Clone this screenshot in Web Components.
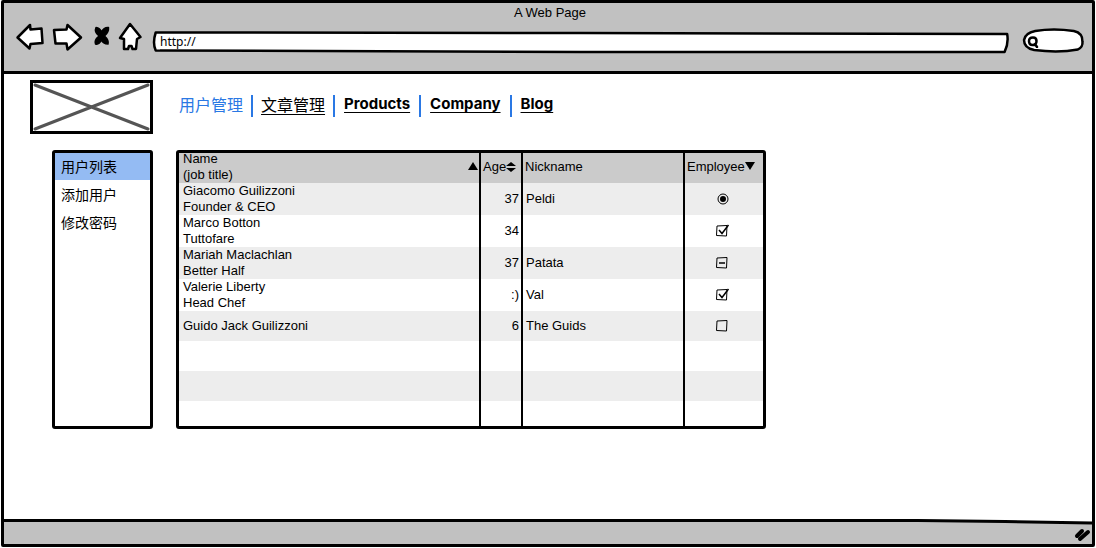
<!DOCTYPE html>
<html lang="zh">
<head>
<meta charset="utf-8">
<title>A Web Page</title>
<style>
  body { margin: 0; background: #fff; color: #000; font: 13px/16px "Liberation Sans", "Noto Sans CJK SC", sans-serif; }
</style>
</head>
<body>
<browser-window heading="A Web Page" address="http://">
  <page-layout>
    <image-placeholder slot="logo"></image-placeholder>
    <link-bar slot="nav" items="用户管理,文章管理,Products,Company,Blog"></link-bar>
    <side-menu slot="side" items="用户列表,添加用户,修改密码"></side-menu>
    <data-grid></data-grid>
  </page-layout>
</browser-window>

<script>
const define = (name, render) => customElements.define(name, class extends HTMLElement {
  connectedCallback() {
    if (this.shadowRoot) return;
    const t = document.createElement('template');
    t.innerHTML = render(this);
    this.attachShadow({ mode: 'open' }).append(t.content.cloneNode(true));
  }
});

// Hand-drawn outline stretched behind the slotted control
const outlines = {
  bar: ['0 0 100 22', 'M0.2 1.5 L50 2 L99.9 3 Q100.1 12 99.6 21 L50 21 L0.2 19.5 Q-0.2 12 0.2 1.5Z'],
  pill: ['0 0 60 25', 'M12 3 Q30 0 50 3 Q59 5 58.500 14 Q59 19 54 21.500 Q35 25 11 22 Q1 20 1 12 Q2 5 12 3Z']
};
define('sketch-box', el => {
  const [box, d] = outlines[el.getAttribute('shape')];
  return `
  <style>
    :host { display: grid; }
    svg, .in { grid-area: 1 / 1; min-width: 0; }
    svg { width: 100%; height: 100%; min-height: 0; overflow: visible; }
    path { fill: #fff; stroke: #000; stroke-width: 2.5; stroke-linejoin: round; vector-effect: non-scaling-stroke; }
    .in { position: relative; display: flex; align-items: center; }
  </style>
  <svg viewBox="${box}" preserveAspectRatio="none" aria-hidden="true"><path d="${d}"/></svg>
  <div class="in"><slot></slot></div>`;
});

define('tool-icon', el => {
  const art = {
    Back: [28, '<path d="M1.500 14.500 14 2 14.500 6.500 25.500 5.500 26.500 20 14.500 21 13.500 25.500Z"/>'],
    Forward: [28, '<path d="M0 7 12.500 6.500 13.500 2 27 14.500 13.500 26.500 12.500 20.500 1.500 20.500Z"/>'],
    Stop: [18, '<path class="solid" d="M4 4.500Q8 5 9.500 9Q12 4 16.500 4.500Q17 9 12.500 13Q17 17 16 21Q11 21 9.500 17Q7 22 3.500 21Q2 17 7 13Q2 9 4 4.500Z"/>'],
    Home: [24, '<path d="M10 1 20.500 14 17 16 16 26 12.500 26 11.500 23 9 23 8 26 4 26 4 16 0 15Z"/>']
  };
  const name = el.getAttribute('name'), [w, path] = art[name];
  return `
  <style>
    :host { display: block; }
    button { display: block; padding: 0; border: 0; background: none; }
    svg { display: block; overflow: visible; fill: #fff; stroke: #000; stroke-width: 2.5; stroke-linejoin: round; }
    .solid { fill: #000; stroke-width: 1.5; }
  </style>
  <button aria-label="${name}"><svg width="${w}" height="28" viewBox="0 0 ${w} 28">${path}</svg></button>`;
});

define('browser-window', el => `
  <style>
    :host { display: flex; flex-direction: column; box-sizing: border-box; min-height: 100vh; padding: 0 1px 1px; }
    .frame { flex: 1; display: flex; flex-direction: column; border: 3px solid #000; border-radius: 2px; }
    header { background: #c1c1c1; border-bottom: 3px solid #000; padding: 2px 8px 20px 12px; }
    h1 { margin: 0 0 2px; font: inherit; text-align: center; }
    .tools { display: flex; align-items: flex-start; gap: 10px; height: 28px; }
    .url { flex: 1; height: 22px; margin-top: 8px; }
    .find { width: 61px; height: 25px; margin: 5px 0 0 5px; }
    input { width: 100%; min-width: 0; box-sizing: border-box; border: 0; padding: 0 6px; outline: 0; background: none; color: inherit; font: 12px/20px "Noto Sans", sans-serif; }
    .find input { padding: 0 8px 0 18px; }
    .lens { position: absolute; left: 4px; top: 7px; fill: none; stroke: #000; stroke-width: 2.5; stroke-linecap: round; }
    main { flex: 1; }
    footer { display: grid; height: 25px; }
    footer svg { grid-area: 1 / 1; }
    .bar { width: 100%; height: 25px; fill: #c1c1c1; overflow: visible; }
    .bar .edge { fill: none; stroke: #000; stroke-width: 3; vector-effect: non-scaling-stroke; }
    .grip { justify-self: end; align-self: end; fill: none; stroke: #000; stroke-width: 4; stroke-linecap: round; }
  </style>
  <div class="frame">
    <header>
      <h1>${el.getAttribute('heading')}</h1>
      <div class="tools">
        <tool-icon name="Back"></tool-icon>
        <tool-icon name="Forward"></tool-icon>
        <tool-icon name="Stop"></tool-icon>
        <tool-icon name="Home"></tool-icon>
        <sketch-box class="url" shape="bar"><input aria-label="Address" value="${el.getAttribute('address')}"></sketch-box>
        <sketch-box class="find" shape="pill">
          <svg class="lens" width="13" height="13" viewBox="0 0 13 13" aria-hidden="true"><path d="M9.500 6C9.500 9 8 10 5.500 10S2 9 2 6 3.500 2.500 6 2.500 9.500 3.500 9.500 6ZM8 9 10 12"/></svg>
          <input aria-label="Search">
        </sketch-box>
      </div>
    </header>
    <main><slot></slot></main>
    <footer>
      <svg class="bar" viewBox="0 0 100 25" preserveAspectRatio="none" aria-hidden="true"><path d="M0 1 80 1 100 4V25H0Z"/><path class="edge" d="M0 1.500H84L92 2.500 100 4"/></svg>
      <svg class="grip" width="18" height="18" viewBox="0 0 18 18" aria-hidden="true"><path d="M3 10 8 5M6 13 14 6"/></svg>
    </footer>
  </div>`);

define('page-layout', () => `
  <style>
    :host { display: grid; grid-template-columns: 121px minmax(0, 1fr); gap: 18px 25px; padding: 7px 27px 24px; }
    .side { margin-left: 22px; display: grid; }
    .nav { padding: 0 0 2px 2px; align-self: center; }
  </style>
  <slot name="logo"></slot>
  <div class="nav"><slot name="nav"></slot></div>
  <div class="side"><slot name="side"></slot></div>
  <div><slot></slot></div>`);

define('image-placeholder', () => `
  <style>
    :host { display: block; outline: 3px solid #000; outline-offset: -2px; }
    svg { display: block; width: 100%; height: 52px; fill: none; stroke: #555; stroke-width: 3; stroke-linecap: round; }
  </style>
  <svg viewBox="0 0 121 52" preserveAspectRatio="none" role="img" aria-label="Logo"><path d="M4 4 117 48M4 48 117 4"/></svg>`);

define('link-bar', el => `
  <style>
    :host { display: block; }
    ul { display: flex; flex-wrap: wrap; margin: 0; padding: 0; list-style: none; }
    li { height: 22px; padding: 0 8px; }
    li.latin { padding: 0 9px; }
    li:first-child { padding-left: 0; }
    li + li { border-left: 2px solid #2a78e4; }
    a { display: block; color: #000; font: 16px/18px "Noto Sans CJK SC", sans-serif; text-decoration: underline 1px; text-underline-offset: 3px; text-decoration-skip-ink: none; }
    .latin a { font: bold 15px/18px Inter, sans-serif; }
    .current a { color: #2a78e4; text-decoration: none; }
  </style>
  <nav><ul>${el.getAttribute('items').split(',').map((t, i) =>
    `<li class="${i ? '' : 'current'}${/^\w/.test(t) ? 'latin' : ''}"><a href="#">${t}</a></li>`).join('')}</ul></nav>`);

define('side-menu', el => `
  <style>
    :host { display: block; outline: 3px solid #000; outline-offset: -2px; border-radius: 2px; }
    ul { margin: 0; padding: 1px 0 0; list-style: none; }
    a { display: block; padding: 0 8px; color: #000; font: 14px/28px "Noto Sans CJK SC", sans-serif; text-decoration: none; }
    .current { background: #94bbf3; }
  </style>
  <nav><ul>${el.getAttribute('items').split(',').map((t, i) =>
    `<li><a href="#" class="${i ? '' : 'current'}">${t}</a></li>`).join('')}</ul></nav>`);

define('state-mark', el => {
  const kind = el.getAttribute('kind');
  const box = '<path d="M2 3 12 2.500 11.500 13 1.500 12.500Z"/>';
  const art = {
    radio: '<circle cx="8" cy="8" r="5"/><circle cx="8" cy="8" r="2" fill="#000" stroke-width="2"/>',
    checked: box + '<path stroke-width="1.500" d="M4 7 7 10.500 13.500 2"/>',
    mixed: box + '<path stroke-width="1.500" d="M4 8H10"/>',
    empty: box
  };
  return `
  <style>
    :host { display: inline-grid; vertical-align: top; }
    input, svg { grid-area: 1 / 1; width: 15px; height: 15px; margin: 0; }
    input { appearance: none; }
    svg { fill: none; stroke: #000; stroke-width: 1; pointer-events: none; }
  </style>
  <input type="${kind === 'radio' ? 'radio' : 'checkbox'}" aria-label="${el.getAttribute('label')}" ${/radio|checked/.test(kind) ? 'checked' : ''}>
  <svg viewBox="0 0 15 15" aria-hidden="true">${art[kind]}</svg>`;
});

define('data-grid', () => {
  const rows = [
    ['Giacomo Guilizzoni<br>Founder &amp; CEO', '37', 'Peldi', 'radio'],
    ['Marco Botton<br>Tuttofare', '34', '', 'checked'],
    ['Mariah Maclachlan<br>Better Half', '37', 'Patata', 'mixed'],
    ['Valerie Liberty<br>Head Chef', ':)', 'Val', 'checked'],
    ['Guido Jack Guilizzoni', '6', 'The Guids', 'empty']
  ];
  const arrow = d => `<svg width="10" height="12" viewBox="0 0 10 12" aria-hidden="true"><path d="${d}"/></svg>`;
  return `
  <style>
    :host { display: block; max-width: 588px; outline: 3px solid #000; outline-offset: -2px; border-radius: 2px; }
    table { width: 100%; table-layout: fixed; border-collapse: separate; border-spacing: 0; }
    .name { width: 304px; } .age { width: 42px; } .nick { width: 162px; }
    th, td { box-sizing: border-box; height: 30px; padding: 0 2px 0 3px; border-right: 2px solid #000; text-align: left; font-weight: normal; }
    th { padding: 0 0 0 2px; }
    th:first-child, td:first-child { padding-left: 6px; }
    th:first-child { padding-right: 1px; }
    th:last-child, td:last-child { border-right: 0; }
    td:nth-child(2) { text-align: right; }
    td:nth-child(4) { text-align: center; padding: 0 6px 0 0; }
    thead { background: #cbcbcb; }
    tbody tr:nth-child(odd) { background: #ededed; }
    tr.end td { height: 27px; }
    button { display: flex; align-items: center; width: 100%; padding: 0; border: 0; background: none; color: inherit; font: inherit; text-align: left; }
    th:first-child button { justify-content: space-between; }
    svg { flex: none; }
  </style>
  <table>
    <colgroup><col class="name"><col class="age"><col class="nick"><col></colgroup>
    <thead><tr>
      <th><button><span>Name<br>(job title)</span>${arrow('M0 9 5 1 10 9Z')}</button></th>
      <th><button>Age${arrow('M0 5 5 1 10 5ZM0 7 5 11 10 7Z')}</button></th>
      <th><button>Nickname</button></th>
      <th><button>Employee${arrow('M0 1H10L5 9Z')}</button></th>
    </tr></thead>
    <tbody>
      ${rows.map(([n, a, k, s]) => `<tr><td>${n}</td><td>${a}</td><td>${k}</td><td><state-mark kind="${s}" label="Employee: ${n.split('<')[0]}"></state-mark></td></tr>`).join('')}
      <tr><td></td><td></td><td></td><td></td></tr>
      <tr><td></td><td></td><td></td><td></td></tr>
      <tr class="end"><td></td><td></td><td></td><td></td></tr>
    </tbody>
  </table>`;
});
</script>
</body>
</html>
